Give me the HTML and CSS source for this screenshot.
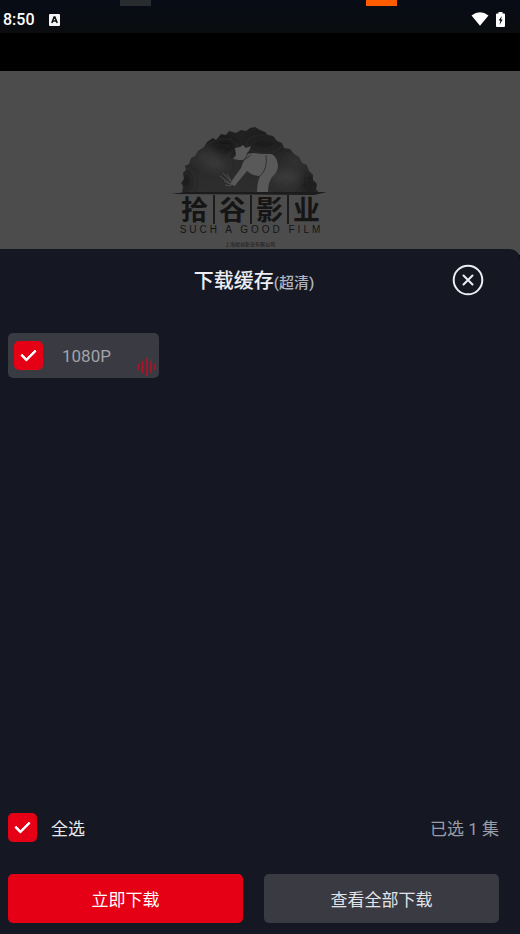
FILE: index.html
```
<!DOCTYPE html>
<html lang="zh-CN">
<head>
    <meta charset="UTF-8">
    <meta name="viewport" content="width=device-width, initial-scale=1.0">
    <title>下载缓存</title>
    <link rel="stylesheet" href="styles.css">
</head>
<body>
    <div class="screen">
        <header class="status-bar">
            <span class="tab tab-gray"></span>
            <span class="tab tab-orange"></span>
            <span class="time">8:50</span>
            <svg class="icon-lang" width="11" height="12" viewBox="0 0 11 12">
                <rect width="11" height="12" rx="1" fill="#f4f4f4"/>
                <path d="M2.8 9 5.1 3h.8l2.3 6M3.7 7h3.6" fill="none" stroke="#0a0c10" stroke-width="1.5"/>
            </svg>
            <div class="status-icons">
                <svg width="18" height="14" viewBox="0 0 18 14">
                    <path d="M0.5 3.5Q9-3 17.5 3.5L9 13.8Z" fill="#fff"/>
                </svg>
                <svg width="9" height="15" viewBox="0 0 9 15">
                    <path d="M2.5 0h4v1.5H8q1 0 1 1V14q0 1-1 1H1q-1 0-1-1V2.5q0-1 1-1h1.5Z" fill="#fff"/>
                    <path d="M5.8 4 2.6 8.6h1.7L3.6 12.7 6.7 7.6H5Z" fill="#0a0c10"/>
                </svg>
            </div>
        </header>

        <div class="video">
            <div class="logo">
                <svg class="logo-art" width="160" height="70" viewBox="6 10 160 70">
                    <defs>
                        <linearGradient id="ink" x1="0" y1="0" x2="0" y2="1">
                            <stop offset="0" stop-color="#1e1e1e"/>
                            <stop offset="0.5" stop-color="#2a2a2a"/>
                            <stop offset="1" stop-color="#2e2e2e"/>
                        </linearGradient>
                        <filter id="soft" x="-50%" y="-50%" width="200%" height="200%"><feGaussianBlur stdDeviation="4"/></filter>
                        <clipPath id="hill"><path d="M18 78 19 71 17 68 20 64 19 58 22 55 21 51 25 49 27 43 31 41 34 36 40 32 43 27 49 23 52 25 57 19 62 20 65 16 72 18 77 15 82 16 86 13 91 12 96 15 101 17 104 20 109 21 113 26 118 28 120 33 126 34 130 39 135 42 138 48 143 50 145 56 149 60 149 65 153 69 152 74 155 78Z"/></clipPath>
                    </defs>
                    <g clip-path="url(#hill)">
                        <rect x="6" y="10" width="160" height="70" fill="url(#ink)"/>
                        <g filter="url(#soft)">
                            <ellipse cx="43" cy="42" rx="12" ry="7" fill="#363636"/>
                            <ellipse cx="60" cy="31" rx="13" ry="6" fill="#191919"/>
                            <ellipse cx="100" cy="29" rx="17" ry="6" fill="#1c1c1c"/>
                            <ellipse cx="52" cy="50" rx="11" ry="5" fill="#3b3b3b"/>
                            <ellipse cx="122" cy="62" rx="14" ry="7" fill="#3a3a3a"/>
                            <ellipse cx="131" cy="47" rx="9" ry="6" fill="#303030"/>
                            <ellipse cx="146" cy="70" rx="9" ry="12" fill="#1b1b1b"/>
                            <ellipse cx="22" cy="66" rx="6" ry="12" fill="#1f1f1f"/>
                        </g>
                    </g>
                    <path d="M7 79 22 77H150L163 77 150 80Z" fill="#1c1c1c"/>
                    <path d="M69 44 72 40 71 33 76 32 79 30 82 33 87 31 85 36 82 39 89 38 98 39 108 39Q114 43 114 52Q113 58 108 62Q104 68 104 77H93Q93 68 96 61Q88 61 83 56L73 68 71 71 66 69 69 64 77 53 80 45 75 45Z" fill="#595959"/>
                    <path d="M84 39 79 46 87 40M102 40Q104 54 96 61" fill="none" stroke="#303030" stroke-width="1"/>
                    <path d="M68 70 60 66M68 70 56 61M68 68 59 58M68 68 63 59M67 71 61 70" fill="none" stroke="#505050" stroke-width="1"/>
                </svg>
                <div class="logo-name"><span>拾</span><span>谷</span><span>影</span><span>业</span></div>
                <div class="logo-en">SUCH A GOOD FILM</div>
                <div class="logo-company">上海拾谷影业有限公司</div>
            </div>
        </div>

        <main class="sheet">
            <div class="sheet-head">
                <h1>下载缓存<small>(超清)</small></h1>
                <button class="close" type="button" aria-label="关闭">
                    <svg width="32" height="32" viewBox="0 0 32 32" fill="none" stroke="#eceef4" stroke-width="2">
                        <circle cx="16" cy="16" r="14.3"/>
                        <path d="M11.5 11.5 20.5 20.5M20.5 11.5 11.5 20.5" stroke-linecap="round"/>
                    </svg>
                </button>
            </div>

            <label class="episode">
                <input class="check" type="checkbox" checked>
                <span>1080P</span>
                <svg class="wave" width="20" height="20" viewBox="0 0 20 20" stroke="#b01329" stroke-width="1.7">
                    <path d="M1.5 7V13M5.5 4V16M10 1V19M14 4V16M18 7V13"/>
                </svg>
            </label>

            <div class="select-row">
                <label class="select-all">
                    <input class="check" type="checkbox" checked>
                    <span>全选</span>
                </label>
                <span class="count">已选 1 集</span>
            </div>

            <div class="actions">
                <button class="btn btn-red" type="button">立即下载</button>
                <button class="btn" type="button">查看全部下载</button>
            </div>
        </main>
    </div>
</body>
</html>
```
FILE: styles.css
```
:root {
    --bg: #151822;
    --card: #393a42;
    --red: #e60016;
}

* {
    box-sizing: border-box;
}

body {
    margin: 0;
    background: #000;
    font-family: Roboto, "Noto Sans CJK SC", sans-serif;
}

button {
    font-family: inherit;
    border: none;
    cursor: pointer;
}

svg {
    display: block;
}

.screen {
    display: flex;
    flex-direction: column;
    min-height: 100vh;
}

.status-bar {
    position: relative;
    display: flex;
    align-items: center;
    height: 33px;
    padding: 6px 15px 0 3px;
    background: linear-gradient(#080c17, #0a0c0e);
    color: #fff;
}

.time {
    width: 46px;
    font-size: 16px;
    font-weight: 500;
}

.status-icons {
    display: flex;
    gap: 7px;
    margin-left: auto;
}

.tab {
    position: absolute;
    top: 0;
    width: 31px;
    height: 6px;
}

.tab-gray {
    left: 23%;
    background: #292c2f;
}

.tab-orange {
    right: 123px;
    background: #ff5c00;
}

.video {
    margin-top: 38px;
    height: 184px;
    padding-top: 54px;
    background: #4c4c4c;
    overflow: hidden;
}

.logo {
    display: flex;
    flex-direction: column;
    align-items: center;
    color: #151515;
    padding-right: 20px;
}

.logo-name {
    display: flex;
    font-size: 27px;
    font-weight: 700;
    line-height: 33px;
    height: 29px;
}

.logo-name span {
    width: 37px;
    text-align: center;
}

.logo-name span + span {
    border-left: 2px solid #1c1c1c;
}

.logo-en {
    font-family: "Liberation Sans", sans-serif;
    font-size: 10px;
    line-height: 12px;
    letter-spacing: 3px;
    margin-right: -3px;
}

.logo-company {
    font-size: 5px;
    line-height: 8px;
    margin-top: 4px;
}

.sheet {
    flex: 1;
    display: flex;
    flex-direction: column;
    margin-top: -6px;
    padding: 0 21px 11px 8px;
    background: var(--bg);
    border-radius: 0 10px 0 0;
}

.sheet-head {
    display: flex;
    align-items: center;
    height: 62px;
}

.sheet-head h1 {
    flex: 1;
    margin: 0 0 2px 48px;
    text-align: center;
    font-size: 20px;
    font-weight: 500;
    color: #eceef4;
}

.sheet-head small {
    font-size: 15px;
    color: #b0b3bf;
}

.close {
    margin-right: 15px;
    padding: 0;
    background: none;
}

.check {
    appearance: none;
    width: 29px;
    height: 29px;
    margin: 0;
    border-radius: 5px;
    background: var(--red);
    display: grid;
    place-items: center;
}

/* white tick */
.check:checked::before {
    content: "";
    width: 12px;
    height: 6px;
    margin-bottom: 4px;
    border-left: 3px solid #fff;
    border-bottom: 3px solid #fff;
    border-radius: 1px;
    transform: rotate(-45deg);
}

.episode {
    position: relative;
    display: flex;
    align-items: center;
    gap: 19px;
    width: 151px;
    height: 45px;
    margin-top: 22px;
    padding-left: 6px;
    border-radius: 5px;
    background: var(--card);
    color: #a2a3ab;
    font-size: 17px;
}

.wave {
    position: absolute;
    right: 2px;
    bottom: 1px;
}

.select-row {
    display: flex;
    align-items: center;
    justify-content: space-between;
    margin-top: auto;
    font-size: 17px;
}

.select-all {
    display: flex;
    align-items: center;
    gap: 14px;
    color: #e6e8ee;
}

.count {
    color: #9a9ca8;
}

.actions {
    display: flex;
    gap: 21px;
    margin-top: 32px;
}

.btn {
    flex: 1;
    height: 49px;
    border-radius: 5px;
    background: var(--card);
    color: #e2e3e8;
    font-size: 17px;
}

.btn-red {
    background: var(--red);
    color: #fff;
}
```
